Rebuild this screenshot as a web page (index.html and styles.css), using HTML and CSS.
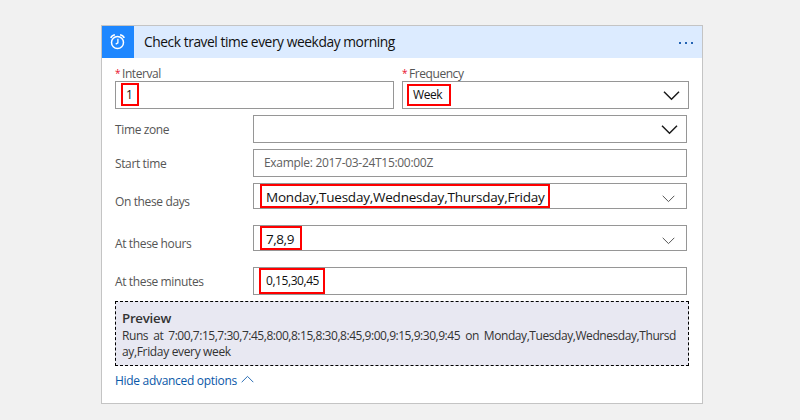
FILE: index.html
```html
<!DOCTYPE html>
<html lang="en">
<head>
<meta charset="utf-8">
<title>Check travel time every weekday morning</title>
<link rel="stylesheet" href="styles.css">
</head>
<body>
<main class="card">
  <header class="card-header">
    <span class="card-icon">
      <svg width="16" height="18" viewBox="0 0 16 18" fill="none" stroke="#fff">
        <circle cx="7.500" cy="9.500" r="6" stroke-width="1.5"/>
        <path d="M7.900 5.800v4l-2.200 1.300" stroke-width="1.3"/>
        <path d="M.8 4.900Q1.700 2.200 4.900 1.700M10.100 1.700Q13.300 2.200 14.200 4.900" stroke-width="1.500"/>
      </svg>
    </span>
    <h1 class="card-title">Check travel time every weekday morning</h1>
    <span class="more"><i></i><i></i><i></i></span>
  </header>
  <div class="card-body">
    <div class="top-row">
      <div class="top-field">
        <label class="top-label"><span class="required">*</span>Interval</label>
        <div class="field"><span class="mark mark-interval">1</span></div>
      </div>
      <div class="top-field">
        <label class="top-label"><span class="required">*</span>Frequency</label>
        <div class="field">
          <span class="mark mark-week">Week</span>
          <svg class="chevron" width="17" height="10" viewBox="0 0 17 10"><path d="M1 .8l7.500 7.500L16 .8"/></svg>
        </div>
      </div>
    </div>
    <div class="row">
      <label class="label">Time zone</label>
      <div class="field"><svg class="chevron" width="17" height="10" viewBox="0 0 17 10"><path d="M1 .8l7.500 7.500L16 .8"/></svg></div>
    </div>
    <div class="row">
      <label class="label">Start time</label>
      <div class="field"><span class="placeholder">Example: 2017-03-24T15:00:00Z</span></div>
    </div>
    <div class="row row-days">
      <label class="label">On these days</label>
      <div class="field">
        <span class="mark mark-days">Monday,Tuesday,Wednesday,Thursday,Friday</span>
        <svg class="chevron chevron-thin" width="13" height="8" viewBox="0 0 13 8"><path d="M.7.800l5.800 5.800L12.300.800"/></svg>
      </div>
    </div>
    <div class="row row-hours">
      <label class="label">At these hours</label>
      <div class="field">
        <span class="mark mark-hours">7,8,9</span>
        <svg class="chevron chevron-thin" width="13" height="8" viewBox="0 0 13 8"><path d="M.7.800l5.800 5.800L12.300.800"/></svg>
      </div>
    </div>
    <div class="row row-minutes">
      <label class="label">At these minutes</label>
      <div class="field"><span class="mark mark-minutes">0,15,30,45</span></div>
    </div>
    <section class="preview">
      <h2 class="preview-title">Preview</h2>
      <p class="preview-text"><span class="line line-full">Runs at <span class="times">7:00,7:15,7:30,7:45,8:00,8:15,8:30,8:45,9:00,9:15,9:30,9:45</span> on Monday,Tuesday,Wednesday,Thursd</span><span class="line">ay,Friday every week</span></p>
    </section>
    <a class="toggle">Hide advanced options<svg width="13" height="8" viewBox="0 0 13 8"><path d="M.7 7.200l5.800-5.800 5.800 5.800"/></svg></a>
  </div>
</main>
</body>
</html>
```
FILE: styles.css
```css
* { box-sizing: border-box; }
body {
  margin: 0;
  height: 420px;
  padding: 25px 97px 16px 101px;
  background: #f1f1f1;
  font: 12px/16px "Open Sans", sans-serif;
  color: #555;
  overflow: hidden;
}
.card { width: 602px; height: 379px; border: 1px solid #c4c4c4; background: #fff; }
.card-header { display: flex; align-items: center; height: 32px; background: #dcebff; }
.card-icon { display: flex; align-items: center; justify-content: center; width: 32px; height: 32px; background: #1e87ff; }
.card-title { margin: 0 0 0 10px; font-size: 13.8px; font-weight: 400; line-height: 32px; letter-spacing: -.44px; color: #111; }
.more { display: flex; gap: 4px; margin: 2px 9px 0 auto; }
.more i { width: 2px; height: 2px; background: #2464b4; }

.card-body { padding: 7px 13px 0; }
.top-row { display: grid; grid-template-columns: 279px 287px; gap: 8px; margin-bottom: 6px; }
.top-label { display: flex; height: 16px; line-height: 17px; letter-spacing: -.43px; }
.required { width: 7px; color: #e8112d; font-size: 10px; line-height: 16px; }
.field { display: flex; align-items: flex-start; height: 28px; border: 1px solid #969696; background: #fff; color: #111; }
.row { display: grid; grid-template-columns: 138px 434px; margin-bottom: 6px; }
.label { line-height: 28px; padding-top: 1px; height: 28px; letter-spacing: -.37px; }
.placeholder { margin-left: 10px; line-height: 26px; color: #606060; letter-spacing: -.3px; }

.row-days, .row-hours { margin-bottom: 16px; }
.row-days .field, .row-hours .field { height: 26px; }
.row-days .label, .row-hours .label { height: 26px; line-height: 26px; padding-top: 6px; }

.mark { flex: none; border: 2px solid #f00; white-space: nowrap; }
.mark-interval { width: 18px; height: 23px; margin: 1px 0 0 5px; padding-left: 3px; line-height: 19px; }
.mark-week { width: 44px; height: 22px; margin: 2px 0 0 4px; padding-left: 4px; line-height: 18px; letter-spacing: -.45px; }
.mark-days, .mark-hours { height: 24px; margin-left: 6px; padding: 1px 0 0 4px; font-size: 13.5px; line-height: 20px; }
.mark-days { width: 290px; letter-spacing: -.22px; }
.mark-hours { width: 42px; letter-spacing: -.45px; }
.mark-minutes { width: 66px; height: 26px; margin-left: 5px; padding-left: 5px; line-height: 22px; letter-spacing: -.43px; }

.chevron { flex: none; margin: 9px 8px 0 auto; fill: none; stroke: #1a1a1a; stroke-width: 1.5; }
.chevron-thin { margin: 11px 11px 0 auto; stroke: #555; stroke-width: 1; }

.preview { width: 574px; height: 65px; padding: 7px 12px 0 6px; border: 1px dashed #000; background: #e8e8f2; color: #333; }
.preview-title { margin: 0; font-size: 13.3px; font-weight: 600; line-height: 18px; letter-spacing: -.27px; }
.preview-text { margin: 1px 0 0; }
.line { display: block; white-space: nowrap; letter-spacing: -.34px; }
.line-full { text-align-last: justify; letter-spacing: -.43px; }
.times { letter-spacing: -.46px; }

.toggle { display: flex; align-items: center; margin-top: 7px; color: #0a58a8; letter-spacing: -.3px; }
.toggle svg { margin: -4px 0 0 4px; fill: none; stroke: #2c6fb5; }
```
